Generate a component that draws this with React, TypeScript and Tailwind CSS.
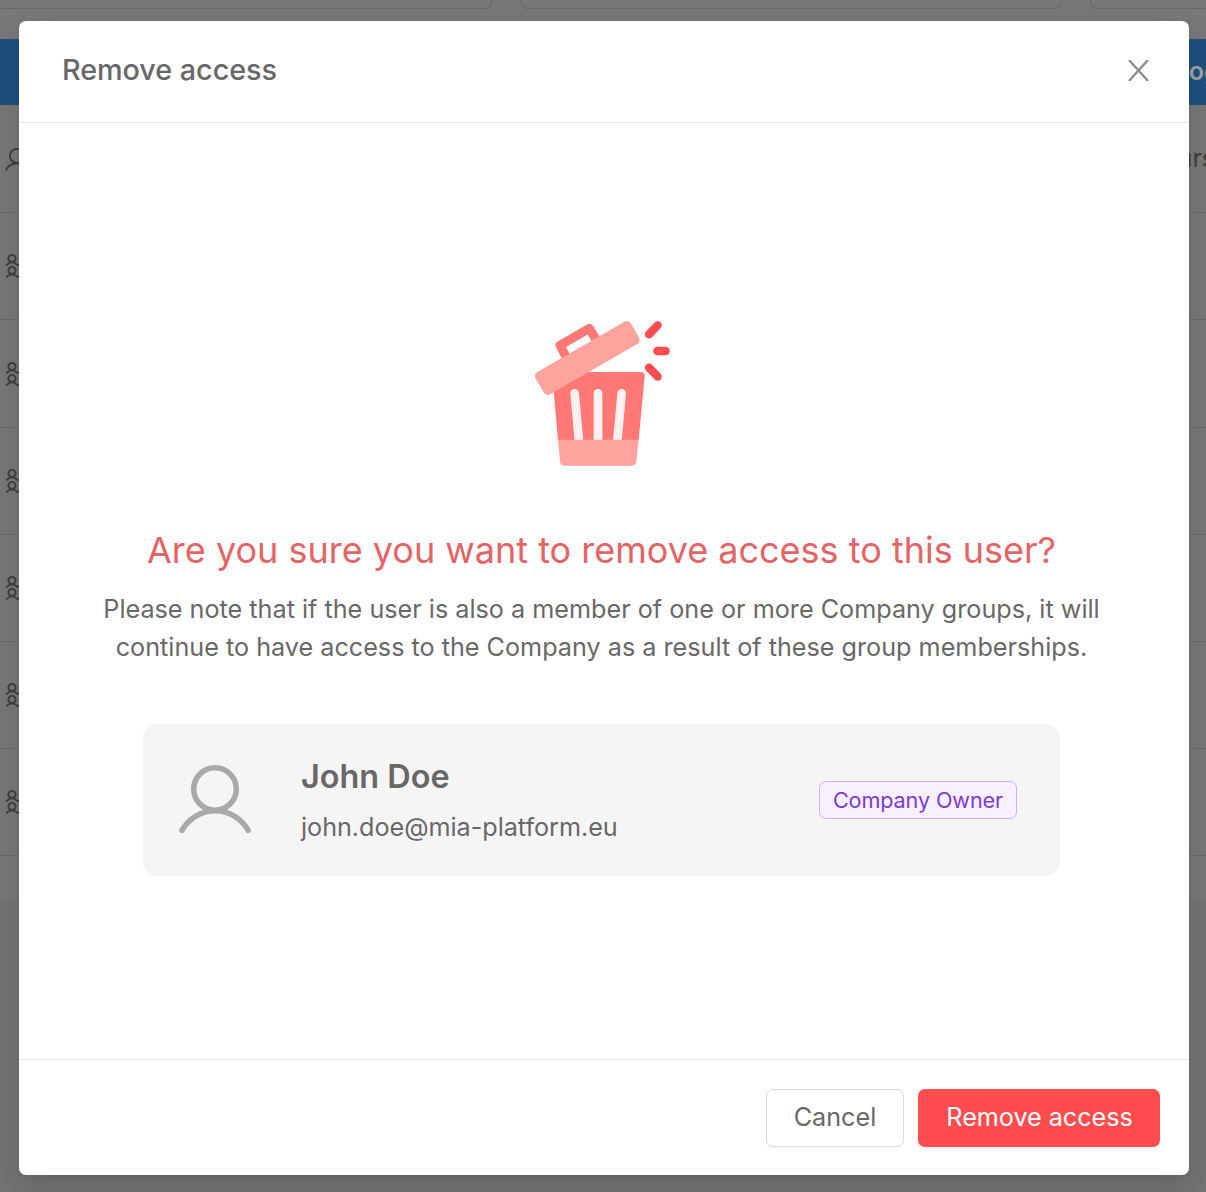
import type { ReactNode } from 'react'

function UserIcon({ className, strokeWidth = 5.5 }: { className?: string; strokeWidth?: number }) {
  return (
    <svg viewBox="0 0 72 72" className={className} fill="none" stroke="currentColor" strokeWidth={strokeWidth} strokeLinecap="round">
      <circle cx="36" cy="27" r="21.3" />
      <path d="M3 68.3A37.9 37.9 0 0 1 69.2 68.3" />
    </svg>
  )
}

function GroupIcon() {
  const people = [
    [7, 5.5],
    [18.4, 5.5],
    [7, 17.5],
    [18.4, 17.5],
  ]
  return (
    <svg viewBox="0 0 26 26" className="h-[26px] w-[26px]" fill="none" stroke="currentColor" strokeWidth="1.9" strokeLinecap="round">
      {people.map(([x, y]) => (
        <g key={`${x}-${y}`} transform={`translate(${x} ${y})`}>
          <circle r="3.6" />
          <path d="M-5.2 6.3Q-3 3.9 0 3.9Q3 3.9 5.2 6.3" />
        </g>
      ))}
    </svg>
  )
}

function TrashIllustration() {
  return (
    <svg viewBox="0 0 495 525" className="ml-[2px] h-[175px] w-[165px]">
      <path d="M96 201H363Q375 201 374 213L356 406H114Z" fill="#ff7875" />
      <g stroke="#fff1f0" strokeWidth="26" strokeLinecap="round">
        <path d="M164 265L178 420" />
        <path d="M234 265V420" />
        <path d="M305 265L291 420" />
      </g>
      <path d="M114 404H356L349 469Q348 482 336 482H133Q121 482 120 469Z" fill="#ffa39e" />
      <path d="M144 166L120 121L208 70L234 114" fill="none" stroke="#ff7875" strokeWidth="27" strokeLinejoin="round" />
      <rect x="-165" y="-38.5" width="330" height="77" rx="14" transform="translate(202 159) rotate(-30)" fill="#ffa39e" />
      <g stroke="#ff4d4f" strokeWidth="25" strokeLinecap="round">
        <path d="M387 88L413 61" />
        <path d="M412 138H437" />
        <path d="M387 188L413 215" />
      </g>
    </svg>
  )
}

function Row({ className, children }: { className: string; children?: ReactNode }) {
  return <div className={`flex items-center border-b border-[#6c6c6c] pl-[5px] ${className}`}>{children}</div>
}

function Background() {
  return (
    <div className="h-[899px] bg-[#797979] text-[25.2px] text-[#3f3f3f]">
      <div className="flex h-[39px] gap-[29px]">
        <div className="h-[9px] w-[492px] rounded-br-[7px] border-r border-b border-[#696969]" />
        <div className="h-[9px] w-[540px] rounded-b-[7px] border-x border-b border-[#696969]" />
        <div className="h-[9px] flex-1 rounded-bl-[7px] border-b border-l border-[#696969]" />
      </div>
      <div className="flex h-[66px] items-center bg-[#1e5180] pl-[1174.5px] font-semibold whitespace-nowrap text-[#a5a5a5]">
        Log in
      </div>
      <Row className="h-[108px]">
        <UserIcon className="h-6 w-6 shrink-0" />
        <span className="ml-[1118.5px] whitespace-nowrap">hours ago</span>
      </Row>
      <Row className="h-[107px]"><GroupIcon /></Row>
      <Row className="h-[108px]"><GroupIcon /></Row>
      <Row className="h-[107px]"><GroupIcon /></Row>
      <Row className="h-[107px]"><GroupIcon /></Row>
      <Row className="h-[107px]"><GroupIcon /></Row>
      <Row className="h-[107px]"><GroupIcon /></Row>
    </div>
  )
}

export default function App() {
  return (
    <div className="relative h-[1192px] overflow-hidden bg-[#747576] font-['Inter',sans-serif] text-[#686868]">
      <Background />
      <div
        role="dialog"
        className="absolute top-[21px] left-[19px] flex h-[1154px] w-[1170px] flex-col rounded-[7px] bg-white shadow-[0_5px_11px_-7px_rgba(0,0,0,0.12),0_11px_29px_0_rgba(0,0,0,0.08),0_16px_50px_14px_rgba(0,0,0,0.05)]"
      >
        <header className="flex h-[102px] items-center justify-between border-b border-[#e5e5e5] pr-[40px] pb-[4px] pl-[43px]">
          <h1 className="text-[28.8px] leading-[44px] font-medium tracking-[-0.06px]">Remove access</h1>
          <button aria-label="Close" className="mt-[2px] text-[#8c8c8c]">
            <svg viewBox="0 0 21 21" className="h-[21px] w-[21px]" fill="none" stroke="currentColor" strokeWidth="2.3">
              <path d="M1 0L20 21M20 0L1 21" />
            </svg>
          </button>
        </header>

        <main className="flex flex-1 flex-col items-center pt-[182px] pr-[5px]">
          <TrashIllustration />
          <h2 className="mt-[46px] text-[36px] leading-[48px] whitespace-nowrap text-[#e46465]">
            Are you sure you want to remove access to this user?
          </h2>
          <p className="mt-[16px] text-center text-[25.2px] leading-[38px]">
            Please note that if the user is also a member of one or more Company groups, it will
            <br />
            continue to have access to the Company as a result of these group memberships.
          </p>
          <section className="mt-[58px] flex h-[152px] w-[917px] items-center rounded-[14px] bg-[#f5f5f5] pr-[43px] pl-[36px]">
            <UserIcon className="mb-[4px] h-[72px] w-[72px] text-[#a9a9a9]" />
            <div className="ml-[50px] flex-1 pt-[5px]">
              <div className="text-[32.4px] leading-[50px] font-semibold">John Doe</div>
              <div className="text-[25.2px] leading-[51px] tracking-[-0.03px]">john.doe@mia-platform.eu</div>
            </div>
            <span className="flex h-[38px] w-[198px] items-center justify-center rounded-[7px] border border-[#d3adf7] bg-[#f9f0ff] text-[21.6px] tracking-[-0.1px] whitespace-nowrap text-[#7a3bd6]">
              Company Owner
            </span>
          </section>
        </main>

        <footer className="flex h-[116px] items-center justify-end gap-[14px] border-t border-[#e5e5e5] pr-[29px] text-[25.2px]">
          <button className="h-[58px] w-[138px] rounded-[7px] border border-[#d9d9d9] bg-white shadow-[0_3px_0_rgba(0,0,0,0.02)]">
            Cancel
          </button>
          <button className="h-[58px] w-[242px] rounded-[7px] bg-[#ff4d4f] pl-px tracking-[-0.04px] text-white shadow-[0_3px_0_rgba(0,0,0,0.045)]">
            Remove access
          </button>
        </footer>
      </div>
    </div>
  )
}
